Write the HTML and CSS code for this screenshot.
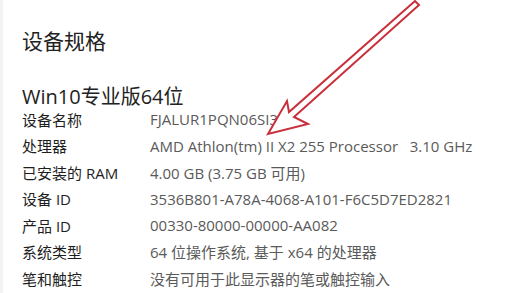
FILE: index.html
```html
<!DOCTYPE html>
<html lang="zh-CN">
<head>
    <meta charset="UTF-8">
    <title>设备规格</title>
    <link rel="stylesheet" href="styles.css">
</head>
<body>
    <div class="page">
        <h1 class="title">设备规格</h1>
        <h2 class="edition">Win10专业版64位</h2>
        <div class="specs">
            <div class="label">设备名称</div>
            <div class="value">FJALUR1PQN06SI3</div>
            <div class="label">处理器</div>
            <div class="value">AMD Athlon(tm) II X2 255 Processor&nbsp;&nbsp;&nbsp;3.10 GHz</div>
            <div class="label">已安装的 RAM</div>
            <div class="value">4.00 GB (3.75 GB 可用)</div>
            <div class="label">设备 ID</div>
            <div class="value">3536B801-A78A-4068-A101-F6C5D7ED2821</div>
            <div class="label">产品 ID</div>
            <div class="value">00330-80000-00000-AA082</div>
            <div class="label">系统类型</div>
            <div class="value">64 位操作系统, 基于 x64 的处理器</div>
            <div class="label">笔和触控</div>
            <div class="value">没有可用于此显示器的笔或触控输入</div>
        </div>
    </div>

    <!-- 红色提示箭头 -->
    <svg class="arrow" width="529" height="293" viewBox="0 0 529 293">
        <polygon points="268,134 287,101 289,112 415,1 419,5 294,117 308,124"
                 fill="#fff" stroke="#c9303b" stroke-width="2" stroke-linejoin="miter"/>
    </svg>
</body>
</html>
```

FILE: styles.css
```css
body {
    margin: 0;
    background: #fff;
    font-family: "Open Sans", "Noto Sans CJK SC", sans-serif;
    color: #222;
}
.page {
    position: relative;
    height: 293px;
    padding: 26px 0 0 19px;
    box-sizing: border-box;
    border-left: 3px solid #f3f3f3;
}
.title {
    margin: 0;
    font-size: 21px;
    font-weight: normal;
    line-height: 30px;
}
.edition {
    margin: 32px 0 0;
    font-size: 20px;
    font-weight: normal;
    line-height: 18px;
}
.specs {
    display: grid;
    grid-template-columns: 128px auto;
    grid-auto-rows: 26.5px;
    align-items: center;
    font-size: 15px;
}
.label {
    color: #1e1e1e;
}
.value {
    color: #5a5a5a;
    white-space: nowrap;
}
.arrow {
    position: absolute;
    top: 0;
    left: 0;
}
```
